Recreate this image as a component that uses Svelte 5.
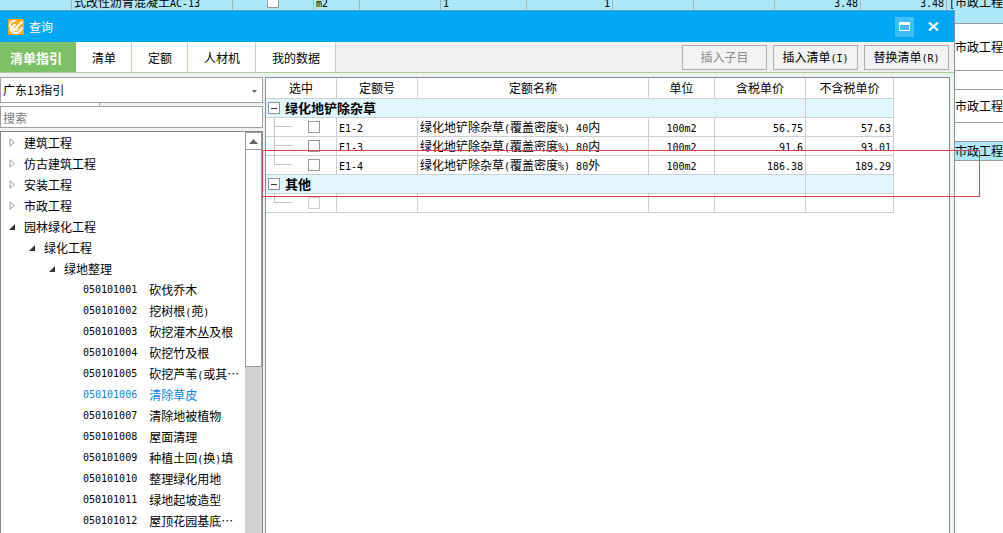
<script lang="ts">
  const tabs = ["清单指引", "清单", "定额", "人材机", "我的数据"];
  let activeTab = $state("清单指引");

  const sheetHead = ["", "式改性沥青混凝土AC-13", "", "m2", "", "1", "1", "", "", "3.48", "3.48"];
  const sheetRows = [
    { size: "tall", text: "[市政工程" },
    { size: "short", text: "" },
    { size: "medium", text: "[市政工程" },
    { size: "short", text: "" },
    { size: "short picked", text: "[市政工程" },
  ];

  const folders = [
    { name: "建筑工程", level: 0, open: false },
    { name: "仿古建筑工程", level: 0, open: false },
    { name: "安装工程", level: 0, open: false },
    { name: "市政工程", level: 0, open: false },
    { name: "园林绿化工程", level: 0, open: true },
    { name: "绿化工程", level: 1, open: true },
    { name: "绿地整理", level: 2, open: true },
  ];

  const items = [
    { code: "050101001", name: "砍伐乔木" },
    { code: "050101002", name: "挖树根(蔸)" },
    { code: "050101003", name: "砍挖灌木丛及根" },
    { code: "050101004", name: "砍挖竹及根" },
    { code: "050101005", name: "砍挖芦苇(或其…" },
    { code: "050101006", name: "清除草皮" },
    { code: "050101007", name: "清除地被植物" },
    { code: "050101008", name: "屋面清理" },
    { code: "050101009", name: "种植土回(换)填" },
    { code: "050101010", name: "整理绿化用地" },
    { code: "050101011", name: "绿地起坡造型" },
    { code: "050101012", name: "屋顶花园基底…" },
  ];
  let selected = $state("050101006");

  const columns = ["选中", "定额号", "定额名称", "单位", "含税单价", "不含税单价"];
  const groups = [
    {
      name: "绿化地铲除杂草",
      rows: [
        { id: "E1-2", name: "绿化地铲除杂草(覆盖密度%) 40内", unit: "100m2", taxed: "56.75", untaxed: "57.63" },
        { id: "E1-3", name: "绿化地铲除杂草(覆盖密度%) 80内", unit: "100m2", taxed: "91.6", untaxed: "93.01" },
        { id: "E1-4", name: "绿化地铲除杂草(覆盖密度%) 80外", unit: "100m2", taxed: "186.38", untaxed: "189.29" },
      ],
    },
    { name: "其他", rows: [{ id: "", name: "", unit: "", taxed: "", untaxed: "" }] },
  ];

  // half-width characters get their own font so they take half a CJK cell
  const split = (text: string) => text.split(/([\x20-\x7e]+)/).filter(Boolean);
  const isLatin = (part: string) => /^[\x20-\x7e]/.test(part);
</script>

{#snippet mixed(text: string)}
  {#each split(text) as part}{#if isLatin(part)}<span class="half">{part}</span>{:else}{part}{/if}{/each}
{/snippet}

<div class="screen">
  <div class="sheet">
    <table>
      <colgroup>
        <col class="s-first" /><col class="s-name" /><col class="s-mid" /><col class="s-unit" />
        <col class="s-mid" /><col class="s-num" /><col class="s-num" /><col class="s-mid" />
        <col class="s-mid" /><col class="s-num" /><col class="s-num" /><col />
      </colgroup>
      <tbody>
        <tr class="head picked">
          {#each sheetHead as text, i}
            <td class:right={i === 6 || i > 8} class:center={i === 2}>
              {#if i === 2}
                <input type="checkbox" aria-label="主要清单" />
              {:else}
                {@render mixed(text)}
              {/if}
            </td>
          {/each}
          <td>{@render mixed("[市政工程")}</td>
        </tr>
        {#each sheetRows as row}
          <tr class={row.size}>
            <td colspan="11"></td>
            <td>{@render mixed(row.text)}</td>
          </tr>
        {/each}
      </tbody>
    </table>
  </div>

  <div class="dialog" role="dialog" aria-labelledby="dialog-title">
    <header class="titlebar">
      <svg class="logo" viewBox="0 0 16 16" aria-hidden="true">
        <rect width="16" height="16" rx="1.500" fill="#f7a823" />
        <path d="M7.500 1.500C4 2 1.500 4 1.800 6.500c.2 1.500 1.200 2 2.400 1.600L7.500 5" fill="none" stroke="#fff" stroke-width="2" />
        <path d="M14.500 2.500L6.500 10.500 3 8.500c-1 2.500.5 5 3.500 5.500 4 .4 7-2 7.500-6" fill="none" stroke="#fff" stroke-width="2" />
        <path d="M4 10c1 2.500 4.500 2.500 7-.5" fill="none" stroke="#fff0cf" stroke-width="1.500" />
      </svg>
      <span id="dialog-title">查询</span>
      <button type="button" class="win max" aria-label="最大化">
        <svg width="11" height="9" viewBox="0 0 11 9"><path d="M.5 1.500h10v7H.5z" fill="none" stroke="#fff" /><path d="M0 0h11v3H0z" fill="#fff" /></svg>
      </button>
      <button type="button" class="win" aria-label="关闭">
        <svg width="11" height="9" viewBox="0 0 11 9"><path d="M1 .5l9 8M10 .5l-9 8" stroke="#fff" stroke-width="2.200" /></svg>
      </button>
    </header>

    <div class="toolbar">
      <div class="tabs" role="tablist">
        {#each tabs as tab}
          <button
            type="button"
            role="tab"
            class="tab"
            class:active={tab === activeTab}
            aria-selected={tab === activeTab}
            onclick={() => (activeTab = tab)}
          >
            {tab}
          </button>
        {/each}
      </div>
      <div class="actions">
        <button type="button" class="action" disabled>插入子目</button>
        <button type="button" class="action">{@render mixed("插入清单(I)")}</button>
        <button type="button" class="action">{@render mixed("替换清单(R)")}</button>
      </div>
    </div>

    <div class="body">
      <aside class="side">
        <div class="combo">
          <select aria-label="指引">
            <option>广东13指引</option>
          </select>
          <svg width="5" height="3" viewBox="0 0 5 3" aria-hidden="true"><path d="M0 0h5L2.500 3z" fill="#666" /></svg>
        </div>
        <div class="notch"></div>
        <input class="search" type="text" placeholder="搜索" aria-label="搜索" />
        <div class="tree-box">
          <ul class="tree">
            {#each folders as folder}
              <li>
                <button type="button" class="node level-{folder.level}" aria-expanded={folder.open}>
                  {#if folder.open}
                    <svg width="6" height="6" viewBox="0 0 6 6"><path d="M6 0v6H0z" fill="#333" /></svg>
                  {:else}
                    <svg width="6" height="9" viewBox="0 0 6 9"><path d="M1 .8L5.300 4.500 1 8.200z" fill="none" stroke="#999" /></svg>
                  {/if}
                  {folder.name}
                </button>
              </li>
            {/each}
            {#each items as item}
              <li>
                <button
                  type="button"
                  class="node leaf"
                  class:selected={item.code === selected}
                  onclick={() => (selected = item.code)}
                >
                  <span class="half">{item.code}</span>
                  <span>{@render mixed(item.name)}</span>
                </button>
              </li>
            {/each}
          </ul>
          <div class="scroll">
            <button type="button" class="scroll-up" aria-label="向上滚动">
              <svg width="9" height="5" viewBox="0 0 9 5"><path d="M4.500 0L9 5H0z" fill="#666" /></svg>
            </button>
            <div class="thumb"></div>
          </div>
        </div>
      </aside>

      <section class="result">
        <table>
          <colgroup>
            <col class="c-pick" /><col class="c-id" /><col class="c-name" />
            <col class="c-unit" /><col class="c-taxed" /><col class="c-untaxed" />
          </colgroup>
          <thead>
            <tr>
              {#each columns as column}
                <th scope="col">{column}</th>
              {/each}
            </tr>
          </thead>
          <tbody>
            {#each groups as group}
              <tr class="group">
                <td colspan="5">
                  <div class="group-name">
                    <button type="button" class="fold" aria-label="折叠{group.name}"></button>
                    {group.name}
                  </div>
                </td>
                <td></td>
              </tr>
              {#each group.rows as row, i}
                <tr>
                  <td class="pick">
                    <div class="branch" class:last={i === group.rows.length - 1}>
                      <span class="stem"></span>
                      <input type="checkbox" aria-label="选中 {row.id}" disabled={!row.id} />
                    </div>
                  </td>
                  <td>{@render mixed(row.id)}</td>
                  <td>{@render mixed(row.name)}</td>
                  <td class="center">{@render mixed(row.unit)}</td>
                  <td class="right">{@render mixed(row.taxed)}</td>
                  <td class="right">{@render mixed(row.untaxed)}</td>
                </tr>
              {/each}
            {/each}
          </tbody>
        </table>
      </section>
    </div>
  </div>

  <div class="marker"></div>
</div>

<style>
  :global(body) {
    margin: 0;
    background: #fff;
  }
  .screen {
    position: relative;
    height: 100vh;
    overflow: hidden;
    font-family: "Noto Sans CJK SC", sans-serif;
    font-size: 12px;
    line-height: 18px;
    color: #000;
  }
  .screen * {
    box-sizing: border-box;
  }
  button,
  input,
  select {
    font: inherit;
    color: inherit;
    margin: 0;
    padding: 0;
    border: none;
    border-radius: 0;
    background: none;
  }
  .half {
    font-family: "DejaVu Sans Mono", monospace;
    font-size: 10px;
    line-height: 12px;
    white-space: pre;
  }
  table {
    table-layout: fixed;
    border-collapse: separate;
    border-spacing: 0;
  }
  td,
  th {
    padding: 0 2px;
    white-space: nowrap;
    overflow: hidden;
  }
  .right {
    text-align: right;
  }
  .center {
    text-align: center;
  }
  input[type="checkbox"] {
    appearance: none;
    display: block;
    width: 12px;
    height: 12px;
    border: 1px solid #9a9a9a;
    background: #fff;
  }
  input[type="checkbox"]:disabled {
    border-color: #ccc;
  }

  /* spreadsheet behind the dialog, scrolled a little */
  .sheet {
    overflow: hidden;
  }
  .sheet table {
    width: 100%;
    margin-top: -20px;
  }
  .sheet td {
    border-right: 1px solid #a5b4ba;
    border-bottom: 1px solid #999;
  }
  .sheet td:last-child {
    border-right: none;
  }
  .sheet input {
    margin: 0 auto;
  }
  .head td {
    height: 44px;
  }
  .tall td {
    height: 47px;
  }
  .medium td {
    height: 33px;
  }
  .short td {
    height: 19px;
    line-height: 16px;
  }
  .picked {
    background: #ace8f8;
  }
  .s-first {
    width: 72px;
  }
  .s-name {
    width: 161px;
  }
  .s-mid {
    width: 81px;
  }
  .s-unit {
    width: 46px;
  }
  .s-num {
    width: 86px;
  }

  .dialog {
    position: absolute;
    inset: 10px 48px 0 0;
    display: flex;
    flex-direction: column;
    border-top: 1px solid #5d9fc4;
    border-right: 1px solid #8c9499;
    background: #f0f0f0;
  }
  .titlebar {
    display: flex;
    align-items: center;
    flex: none;
    height: 31px;
    padding: 0 11px 0 8px;
    background: #00a8f3;
    color: #fff;
  }
  .logo {
    width: 16px;
    height: 16px;
    margin-right: 5px;
  }
  .win {
    display: flex;
    align-items: center;
    justify-content: center;
    width: 19px;
    height: 20px;
    margin-left: 10px;
  }
  .win.max {
    margin-left: auto;
    background: #40bef7;
  }
  .toolbar {
    display: flex;
    justify-content: space-between;
    flex: none;
    height: 31px;
    border-bottom: 1px solid #a9d09b;
  }
  .tabs {
    display: flex;
  }
  .tab {
    padding: 2px 15px 0 16px;
    border-right: 1px solid #b5dba9;
    background: #fff;
  }
  .tab.active {
    padding: 2px 14px 0 10px;
    border-right: none;
    background: #7dc167;
    color: #fff;
    font-size: 13px;
    font-weight: 700;
  }
  .actions {
    display: flex;
    align-items: center;
    gap: 6px;
    padding-right: 5px;
  }
  .action {
    width: 85px;
    height: 25px;
    border: 1px solid #adadad;
    background: #f2f2f2;
  }
  .action:disabled {
    color: #8c8c8c;
  }

  .body {
    display: flex;
    flex: 1;
    min-height: 0;
    padding: 4px 4px 0 0;
    background: #eef3ee;
  }
  .side {
    display: flex;
    flex-direction: column;
    width: 263px;
    margin-right: 2px;
    background: #f0f0f0;
  }
  .combo {
    position: relative;
    flex: none;
    height: 26px;
    border: 1px solid #a0a0a0;
    background: #fff;
  }
  .combo select {
    appearance: none;
    width: 100%;
    height: 24px;
    padding: 0 2px;
  }
  .combo svg {
    position: absolute;
    top: 12px;
    right: 5px;
    pointer-events: none;
  }
  .notch {
    flex: none;
    width: 100px;
    height: 3px;
    border-right: 1px solid #a0a0a0;
    background: #fff;
  }
  .search {
    flex: none;
    height: 22px;
    margin-bottom: 3px;
    padding: 0 2px;
    border: 1px solid #a0a0a0;
    background: #fff;
  }
  .search::placeholder {
    color: #777;
  }
  .tree-box {
    display: flex;
    flex: 1;
    min-height: 0;
    border: 1px solid #828790;
    border-bottom: none;
    background: #fff;
  }
  .tree {
    flex: 1;
    min-width: 0;
    margin: 0;
    padding: 0;
    overflow: hidden;
    list-style: none;
  }
  .node {
    display: flex;
    align-items: center;
    width: 100%;
    height: 21px;
    white-space: nowrap;
  }
  .node svg {
    margin-right: 9px;
  }
  .level-0 {
    padding-left: 8px;
  }
  .level-1 {
    padding-left: 28px;
  }
  .level-2 {
    padding-left: 48px;
  }
  .leaf {
    gap: 12px;
    padding-left: 82px;
  }
  .selected {
    color: #0a84dc;
  }
  .scroll {
    display: flex;
    flex-direction: column;
    width: 17px;
    background: #d2d2d2;
  }
  .scroll-up {
    display: flex;
    align-items: center;
    justify-content: center;
    flex: none;
    height: 18px;
    border: 1px solid #999;
    background: #fff;
  }
  .thumb {
    height: 54%;
    border: 1px solid #999;
    border-top: none;
    background: #fff;
  }

  .result {
    flex: 1;
    min-width: 0;
    overflow: hidden;
    border: 1px solid #7f8c92;
    border-bottom: none;
    background: #fff;
  }
  .result table {
    width: 628px;
  }
  .c-pick {
    width: 71px;
  }
  .c-id {
    width: 81px;
  }
  .c-name {
    width: 231px;
  }
  .c-unit {
    width: 66px;
  }
  .c-taxed {
    width: 91px;
  }
  .c-untaxed {
    width: 88px;
  }
  .result th,
  .result td {
    height: 19px;
    border-right: 1px solid #ccd0d2;
    border-bottom: 1px solid #ccd0d2;
  }
  .result th {
    height: 21px;
    font-weight: 400;
  }
  .group td {
    padding: 0 2px;
    background: #e1f6fe;
    font-weight: 700;
    font-size: 13px;
  }
  .group-name {
    display: flex;
    align-items: center;
    gap: 5px;
    height: 18px;
  }
  .fold {
    width: 12px;
    height: 12px;
    border: 1px solid #8a9499;
    background: linear-gradient(#333, #333) center / 6px 1px no-repeat #fff;
  }
  .result .pick {
    padding: 0 0 0 8px;
    vertical-align: top;
  }
  .branch {
    display: flex;
    height: 18px;
    border-left: 1px solid #c4c4c4;
  }
  .branch.last {
    height: 9px;
  }
  .stem {
    width: 17px;
    height: 9px;
    margin-right: 16px;
    border-bottom: 1px solid #c4c4c4;
  }
  .branch input {
    flex: none;
    margin-top: 3px;
  }

  /* red highlight drawn across both windows */
  .marker {
    position: absolute;
    top: 150px;
    left: 262px;
    right: 23px;
    height: 47px;
    border: 1px solid #dc4048;
    pointer-events: none;
  }
</style>
